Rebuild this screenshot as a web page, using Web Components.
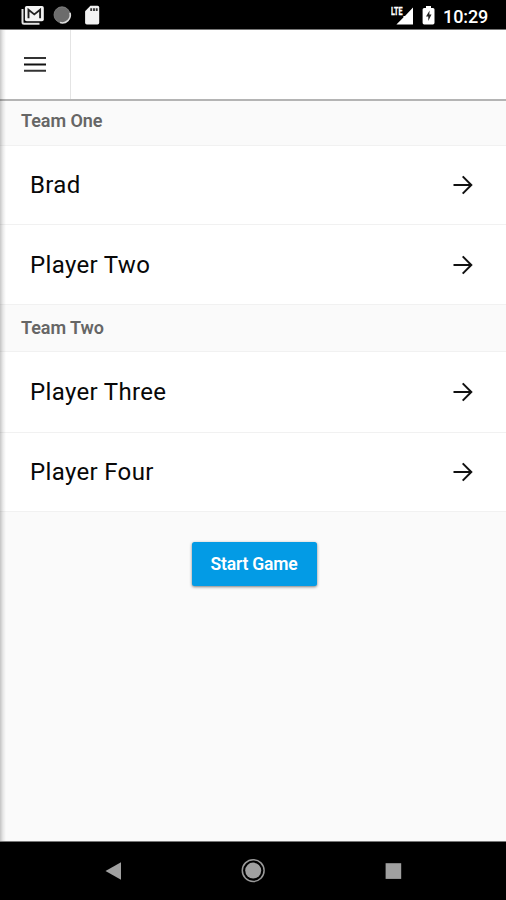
<!DOCTYPE html>
<html lang="en">
<head>
<meta charset="utf-8">
<title>Teams</title>
<style>
html, body { margin: 0; height: 100%; }
body { font-family: Roboto, "Liberation Sans", sans-serif; background: #fafafa; overflow: hidden; }
</style>
</head>
<body>
<game-screen></game-screen>
<script>
const define = (name, html) => {
  const template = document.createElement('template');
  template.innerHTML = html;
  customElements.define(name, class extends HTMLElement {
    constructor() {
      super();
      this.attachShadow({ mode: 'open' }).append(template.content.cloneNode(true));
    }
  });
};

define('status-bar', `
<style>
:host { display: flex; justify-content: space-between; box-sizing: border-box; height: 30px; background: #000; border-bottom: 1px solid #777; color: #fff; }
svg { display: block; flex: none; }
.side { display: flex; }
.time { width: 45px; margin-right: 18px; font-size: 18px; font-weight: 500; line-height: 33px; letter-spacing: -.1px; white-space: nowrap; }
</style>
<div class="side">
  <svg width="110" height="29" viewBox="0 0 110 29">
    <path d="M22.5 9v13.2q0 1.5 1.5 1.5H39.5" fill="none" stroke="#e4e4e4" stroke-width="2"/>
    <rect x="24.9" y="6" width="18.9" height="15.2" rx="1.8" fill="#f4f4f4"/>
    <path d="M28.5 18.3V9.8l5.8 4.6 5.8-4.6v8.5" fill="none" stroke="#222" stroke-width="1.9"/>
    <circle cx="62" cy="14.8" r="8" fill="#6c6c6c" stroke="#858585" stroke-width=".8"/>
    <path d="M70 12.8a8 8 0 0 1-10 9.8" fill="none" stroke="#ddd" stroke-width="1.6"/>
    <path d="M90.4 5.8h7.2q1.6 0 1.6 1.6v15.4q0 1.7-1.7 1.7H86.8q-1.7 0-1.7-1.7V11.2z" fill="#f2f2f2"/>
    <path d="M91.2 8.2v2.8M94 8.2v2.8M96.7 8.2v2.8" stroke="#333" stroke-width="1.9"/>
  </svg>
</div>
<div class="side">
  <svg width="52" height="29" viewBox="391 0 52 29">
    <path d="M413 7.6V24.4H396.4l7-6.9v-1.5h1.6z" fill="#fff"/>
    <text x="391" y="14.6" font-size="10.5" font-weight="700" textLength="11.6" lengthAdjust="spacingAndGlyphs" fill="#fff" stroke="#fff" stroke-width=".3">LTE</text>
    <path d="M426 6h5v2h2q1.5 0 1.5 1.5v13.3q0 1.6-1.6 1.6h-8.7q-1.6 0-1.6-1.6V9.5q0-1.5 1.5-1.5h1.9z" fill="#fff"/>
    <path d="M429.6 10.5l-3.6 6h2.3v4.5l3.2-6.4h-2.2z" fill="#222"/>
  </svg>
  <div class="time">10:29</div>
</div>`);

define('app-toolbar', `
<style>
:host { display: flex; box-sizing: border-box; height: 71px; background: #fff; border-bottom: 2px solid #b4b4b4; }
.menu { display: flex; flex-direction: column; align-items: center; box-sizing: border-box; width: 71px; padding-top: 26px; border-right: 1px solid #e4e4e4; }
svg { display: block; }
</style>
<div class="menu"><svg width="22" height="17" viewBox="0 0 22 17"><path d="M0 2h22M0 14.7h22" stroke="#333" stroke-width="1.9"/><path d="M0 8.5h22" stroke="#111" stroke-width="2"/></svg></div>`);

define('team-header', `
<style>
:host { display: block; box-sizing: border-box; height: var(--h, 45px); padding-left: 21px; line-height: var(--lh, 40px); font-size: 18px; font-weight: 600; letter-spacing: var(--ls, -.05px); color: #666; background: #fafafa; border-bottom: 1px solid #f1f1f1; }
</style>
<slot></slot>`);

define('player-row', `
<style>
:host { display: flex; align-items: center; justify-content: space-between; box-sizing: border-box; height: var(--h, 80px); padding: 0 33px 0 30px; font-size: 24px; letter-spacing: .34px; color: #080808; background: #fff; border-bottom: 1px solid #f1f1f1; }
svg { display: block; }
</style>
<span><slot></slot></span>
<svg width="20" height="20" viewBox="0 0 20 20" fill="none" stroke="#111" stroke-width="2"><path d="M.5 10h17.5M9.7 1.4l8.6 8.6-8.6 8.6"/></svg>`);

define('start-button', `
<style>
:host { display: block; }
button { display: block; box-sizing: border-box; width: 125px; height: 44px; padding: 0; border: 0; border-radius: 2.5px; background: #039be5; box-shadow: 0 1px 3px rgba(0,0,0,.5); color: #fff; font: 600 17.5px/42px Roboto, "Liberation Sans", sans-serif; letter-spacing: -.2px; }
</style>
<button><slot></slot></button>`);

define('nav-bar', `
<style>
:host { display: block; box-sizing: border-box; height: 59px; background: #000; border-top: 1px solid #777; }
svg { display: block; }
</style>
<svg width="506" height="58" viewBox="0 842 506 58">
  <path d="M105.5 871L121 862.3v17.4z" fill="#a0a0a0"/>
  <circle cx="253.2" cy="870.6" r="10.9" fill="none" stroke="#999" stroke-width="1.5"/>
  <circle cx="253.2" cy="870.6" r="8" fill="#a0a0a0"/>
  <rect x="385.6" y="863.2" width="15.6" height="15.7" fill="#a0a0a0"/>
</svg>`);

define('game-screen', `
<style>
:host { display: flex; flex-direction: column; width: 506px; height: 900px; background: #fafafa; }
main { position: relative; flex: 1; display: flex; flex-direction: column; }
main::before { content: ""; position: absolute; z-index: 1; left: 0; top: 0; bottom: 0; width: 6px; background: linear-gradient(90deg, rgba(0,0,0,.22), rgba(0,0,0,.08) 50%, transparent); pointer-events: none; }
start-button { align-self: center; margin: 30px 0 0 2px; }
.second { --h: 47px; --lh: 45px; }
.short { --h: 79px; }
.long { --h: 81px; }
</style>
<status-bar></status-bar>
<main>
  <app-toolbar></app-toolbar>
  <team-header>Team One</team-header>
  <player-row class="short">Brad</player-row>
  <player-row>Player Two</player-row>
  <team-header class="second">Team Two</team-header>
  <player-row class="long">Player Three</player-row>
  <player-row class="short">Player Four</player-row>
  <start-button>Start Game</start-button>
</main>
<nav-bar></nav-bar>`);
</script>
</body>
</html>
